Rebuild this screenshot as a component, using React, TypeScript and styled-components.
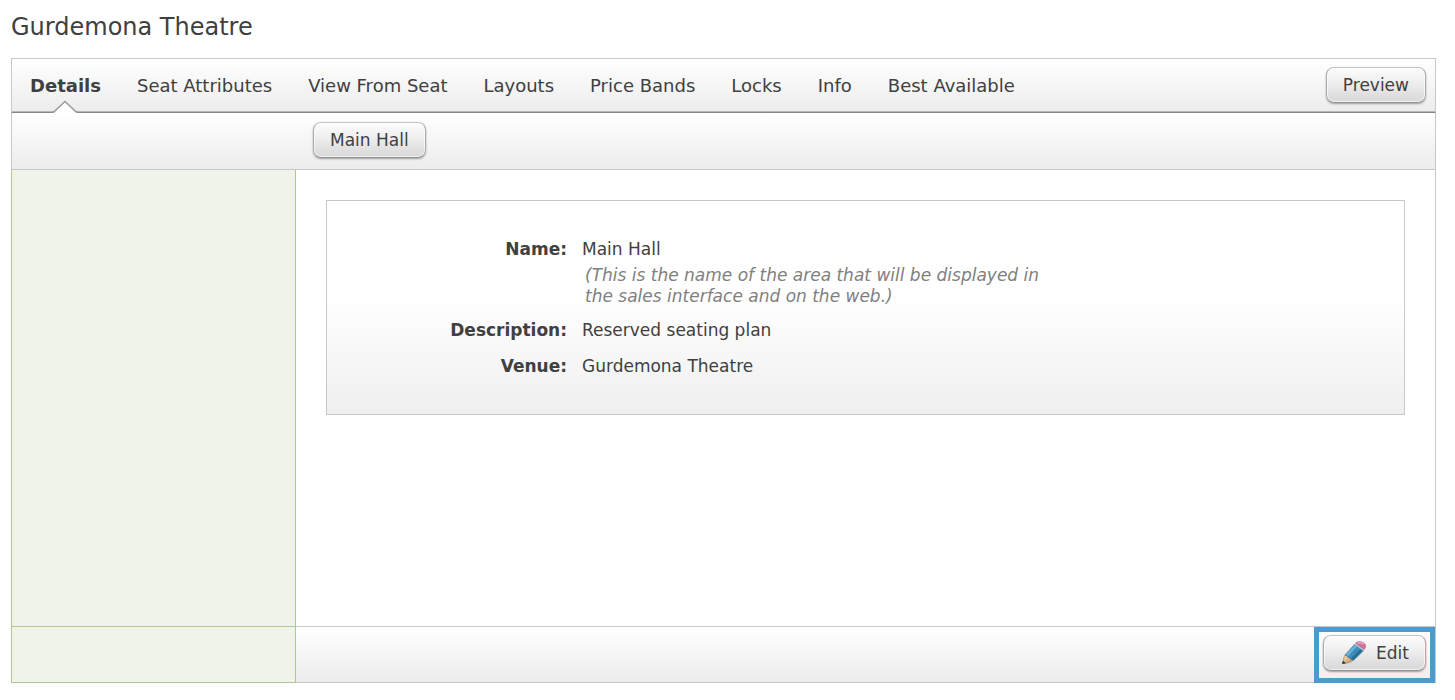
import React from "react";
import styled, { createGlobalStyle } from "styled-components";

const GlobalStyle = createGlobalStyle`
  *, *::before, *::after { box-sizing: border-box; }
  body {
    margin: 0;
    background: #fff;
    color: #404040;
    font-family: Verdana, "DejaVu Sans", sans-serif;
    font-size: 17px;
    line-height: 20px;
  }
`;

const barGradient = "linear-gradient(#ffffff, #ececec)";

const Page = styled.div`
  display: flex;
  flex-direction: column;
  min-height: 100vh;
  padding: 11px 19px 17px 11px;
`;

const Title = styled.h1`
  margin: 0 0 15px;
  font-size: 24px;
  font-weight: 400;
  line-height: 32px;
`;

const Frame = styled.div`
  flex: 1;
  display: flex;
  flex-direction: column;
`;

const TabBar = styled.nav`
  display: flex;
  align-items: stretch;
  height: 55px;
  padding-right: 9px;
  border: 1px solid #c8c8c8;
  border-bottom-color: #868686;
  background: ${barGradient};
  box-shadow: inset 0 -1px #b8b8b8;
`;

const Tab = styled.a<{ $active?: boolean }>`
  position: relative;
  padding: 16px 18px 0;
  color: inherit;
  font-size: 18px;
  font-weight: ${(p) => (p.$active ? 700 : 400)};
  line-height: 22px;
  text-decoration: none;
  white-space: nowrap;
`;

const Pointer = styled.svg`
  position: absolute;
  left: 50%;
  bottom: -1px;
  width: 26px;
  height: 13px;
  margin-left: -13px;
`;

const SubBar = styled.div`
  display: flex;
  align-items: flex-start;
  height: 57px;
  padding: 9px 0 0 301px;
  border: 1px solid #c8c8c8;
  border-top: 0;
  background: ${barGradient};
`;

const Button = styled.button`
  display: flex;
  align-items: center;
  gap: 10px;
  height: 36px;
  padding: 0 16px;
  border: 1px solid #acacac;
  border-top-color: #c4c4c4;
  border-bottom-color: #929292;
  border-radius: 8px;
  background: linear-gradient(#fdfdfd, #ececec 50%, #d8d6d8);
  box-shadow: inset 0 0 0 1px rgba(255, 255, 255, 0.65), 0 1px 2px rgba(0, 0, 0, 0.35);
  color: inherit;
  font: inherit;
  cursor: pointer;
`;

const PreviewSlot = styled.div`
  margin: 8px 0 0 auto;
`;

const Body = styled.div`
  flex: 1;
  display: flex;
`;

const Sidebar = styled.aside`
  width: 285px;
  flex: none;
  border: 1px solid #b0c890;
  border-top: 0;
  background: #f0f3e9;
`;

const Content = styled.main`
  flex: 1;
  padding: 30px;
  border-right: 1px solid #c8c8c8;
  border-bottom: 1px solid #c8c8c8;
`;

const Panel = styled.dl`
  margin: 0;
  padding: 35px 0;
  display: flex;
  flex-direction: column;
  gap: 10px;
  border: 1px solid #c8c8c8;
  background: linear-gradient(#ffffff 45%, #efefef);
`;

const Field = styled.div`
  display: flex;
  gap: 15px;
  line-height: 26px;
`;

const Label = styled.dt`
  width: 240px;
  flex: none;
  font-weight: 700;
  text-align: right;
`;

const Value = styled.dd`
  margin: 0;
  max-width: 470px;
`;

const Hint = styled.em`
  display: block;
  padding: 3px 0 0 3px;
  color: #808080;
  line-height: 21px;
`;

const Footer = styled.footer`
  display: flex;
  height: 56px;
`;

const Actions = styled.div`
  flex: 1;
  display: flex;
  justify-content: flex-end;
  border-right: 1px solid #c8c8c8;
  border-bottom: 1px solid #c8c8c8;
  background: ${barGradient};
`;

const Highlight = styled.div`
  height: 56px;
  padding: 3px 4px 0;
  border: 5px solid #4a9bd1;
  background: linear-gradient(#ffffff, #efefef) padding-box;
`;

function PencilIcon() {
  return (
    <svg width="26" height="26" viewBox="0 0 26 26" aria-hidden="true">
      <defs>
        <linearGradient id="wood" x1="0" y1="0" x2="1" y2="1">
          <stop offset="0" stopColor="#f6e3bd" />
          <stop offset="1" stopColor="#b98d58" />
        </linearGradient>
      </defs>
      <path d="M4 24 L11 23 L24.500 11 L23 9 L10 20 Z" fill="#000" opacity="0.13" />
      <path d="M5 14.600 L13 20.200 L8.500 22.500 L2.500 23.800 L3.300 19 Z" fill="url(#wood)" stroke="#8a6d48" strokeWidth="0.500" />
      <path d="M3.100 20.700 L6 23.200 L2 24 Z" fill="#343638" />
      <path d="M5 15 L14.500 4.400 L23 10.700 L13.300 20.400 Q12.600 18.900 10.600 19 Q10 17 7.800 16.900 Q6.800 14.900 5 15 Z" fill="#3c8dbb" stroke="#2a668c" strokeWidth="0.600" />
      <path d="M5.500 14.800 L14.700 4.700 L17 6.400 L7.800 16.600 Q6.900 14.900 5.500 14.800 Z" fill="#67b0d6" />
      <path d="M10.700 18.700 L20.500 8.900 L22.700 10.600 L13.200 20.100 Q12.400 18.800 10.700 18.700 Z" fill="#286b95" />
      <path d="M14.300 4.600 L16.200 2.600 L24.800 8.900 L22.900 10.800 Z" fill="#aebdc6" />
      <path d="M15.800 3 L16.700 2.200 Q18.200 1.300 20.800 1.700 Q23.400 2.200 24.800 3.900 Q26.200 5.700 25.300 7.900 L24.300 9.300 Z" fill="#d4709d" stroke="#a95680" strokeWidth="0.500" />
      <path d="M17.300 3.100 Q20.500 2 23.600 4.200" fill="none" stroke="#efa9c6" strokeWidth="1.500" />
    </svg>
  );
}

const tabs = [
  "Details",
  "Seat Attributes",
  "View From Seat",
  "Layouts",
  "Price Bands",
  "Locks",
  "Info",
  "Best Available",
];

export default function App() {
  return (
    <>
      <GlobalStyle />
      <Page>
        <Title>Gurdemona Theatre</Title>
        <Frame>
          <TabBar>
            {tabs.map((name, i) => (
              <Tab key={name} href="#" $active={i === 0}>
                {name}
                {i === 0 && (
                  <Pointer viewBox="0 0 26 13" aria-hidden="true">
                    <path d="M1 13 L2 12 L13 1.500 L24 12 L25 13 Z" fill="#fff" />
                    <path d="M0 12.300 H1.500 L13 1.500 L24.500 12.300 H26" fill="none" stroke="#9a9a9a" strokeWidth="1.500" />
                  </Pointer>
                )}
              </Tab>
            ))}
            <PreviewSlot>
              <Button type="button">Preview</Button>
            </PreviewSlot>
          </TabBar>
          <SubBar>
            <Button type="button">Main Hall</Button>
          </SubBar>
          <Body>
            <Sidebar />
            <Content>
              <Panel>
                <Field>
                  <Label>Name:</Label>
                  <Value>
                    Main Hall
                    <Hint>
                      (This is the name of the area that will be displayed in the sales interface and on the web.)
                    </Hint>
                  </Value>
                </Field>
                <Field>
                  <Label>Description:</Label>
                  <Value>Reserved seating plan</Value>
                </Field>
                <Field>
                  <Label>Venue:</Label>
                  <Value>Gurdemona Theatre</Value>
                </Field>
              </Panel>
            </Content>
          </Body>
          <Footer>
            <Sidebar />
            <Actions>
              <Highlight>
                <Button type="button">
                  <PencilIcon />
                  Edit
                </Button>
              </Highlight>
            </Actions>
          </Footer>
        </Frame>
      </Page>
    </>
  );
}
